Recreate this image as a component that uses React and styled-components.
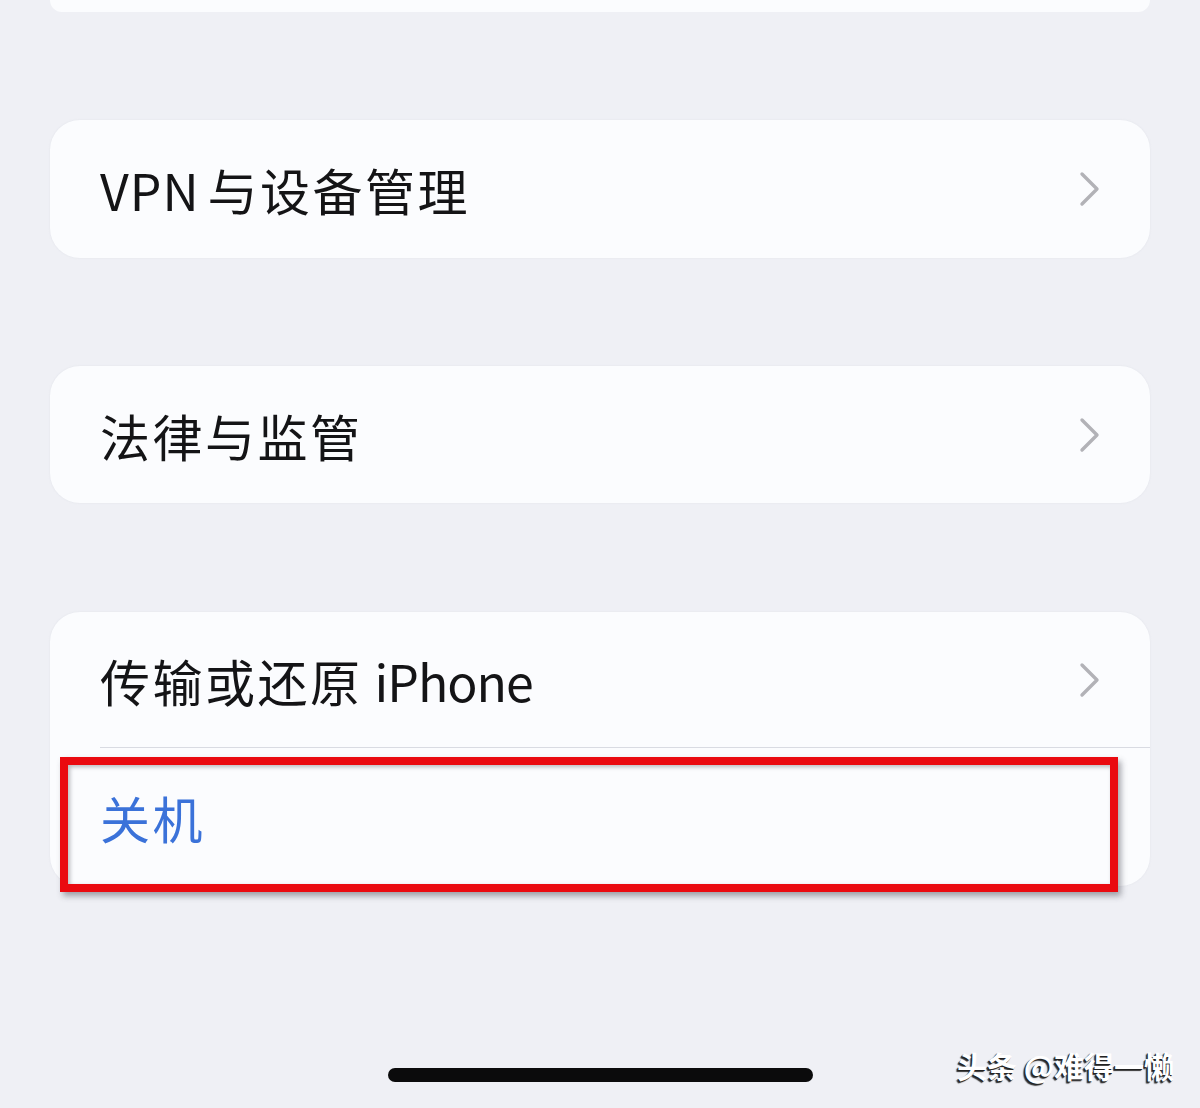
import React from "react";
import styled, { createGlobalStyle } from "styled-components";

const GlobalStyle = createGlobalStyle`
  html, body {
    margin: 0;
    padding: 0;
    background: #eff0f5;
  }
  body {
    font-family: "Noto Sans CJK SC", "Noto Sans", sans-serif;
  }
`;

const Page = styled.div`
  position: relative;
  width: 1200px;
  height: 1108px;
  box-sizing: border-box;
  padding: 0 50px;
  display: flex;
  flex-direction: column;
  overflow: hidden;
  background: #eff0f5;
`;

const Group = styled.div`
  position: relative;
  background: #fbfcfe;
  border-radius: 30px;
  margin-top: ${(p) => p.$gap}px;
  box-shadow: 0 0 2px rgba(200, 204, 215, 0.35);
`;

const CutGroup = styled.div`
  height: 12px;
  background: #fbfcfe;
  border-radius: 0 0 30px 30px;
`;

const Row = styled.div`
  height: ${(p) => p.$h}px;
  display: flex;
  align-items: center;
  justify-content: space-between;
  padding: 0 50px;
  font-size: 50px;
  color: ${(p) => (p.$action ? "#3b72d9" : "#141416")};
  letter-spacing: 2.5px;
  line-height: 1;
`;

const Latin = styled.span`
  letter-spacing: ${(p) => p.$spacing ?? 0}px;
  margin-left: ${(p) => p.$before ?? 0}px;
  margin-right: ${(p) => p.$after ?? 0}px;
`;

const Separator = styled.div`
  height: 1px;
  margin-left: 50px;
  background: #d9dbe2;
`;

const Chevron = styled.svg`
  width: 24px;
  height: 38px;
  flex-shrink: 0;
  margin-right: -2px;
`;

const Highlight = styled.div`
  position: absolute;
  left: 10px;
  top: 145px;
  width: 1058px;
  height: 135px;
  box-sizing: border-box;
  border: 8px solid #ea0a10;
  box-shadow: 3px 4px 6px rgba(60, 60, 70, 0.45),
    inset 2px 2px 4px rgba(60, 60, 70, 0.35);
  pointer-events: none;
`;

const HomeBar = styled.div`
  position: absolute;
  left: 388px;
  top: 1068px;
  width: 425px;
  height: 14px;
  border-radius: 7px;
  background: #0b0b0c;
`;

const Watermark = styled.div`
  position: absolute;
  right: 26px;
  top: 1043px;
  font-size: 30px;
  font-weight: 700;
  color: #ffffff;
  font-family: "Noto Sans CJK SC", sans-serif;
  text-shadow: -1px 1px 0 #222, -2px 2px 1px #333;
  letter-spacing: 0;
`;

const Arrow = () => (
  <Chevron viewBox="0 0 24 38">
    <path
      d="M4 4 L19 19 L4 34"
      fill="none"
      stroke="#b2b2b7"
      strokeWidth="3.4"
      strokeLinecap="round"
      strokeLinejoin="round"
    />
  </Chevron>
);

export default function App() {
  return (
    <>
      <GlobalStyle />
      <Page>
        <CutGroup />

        <Group $gap={108}>
          <Row $h={138}>
            <span>
              <Latin $spacing={1} $after={8}>VPN</Latin>与设备管理
            </span>
            <Arrow />
          </Row>
        </Group>

        <Group $gap={108}>
          <Row $h={137}>
            <span>法律与监管</span>
            <Arrow />
          </Row>
        </Group>

        <Group $gap={109}>
          <Row $h={135}>
            <span>
              传输或还原<Latin $spacing={-1} $before={12}>iPhone</Latin>
            </span>
            <Arrow />
          </Row>
          <Separator />
          <Row $h={138} $action>
            <span>关机</span>
          </Row>
          <Highlight />
        </Group>

        <HomeBar />
        <Watermark>头条 @难得一懒</Watermark>
      </Page>
    </>
  );
}
